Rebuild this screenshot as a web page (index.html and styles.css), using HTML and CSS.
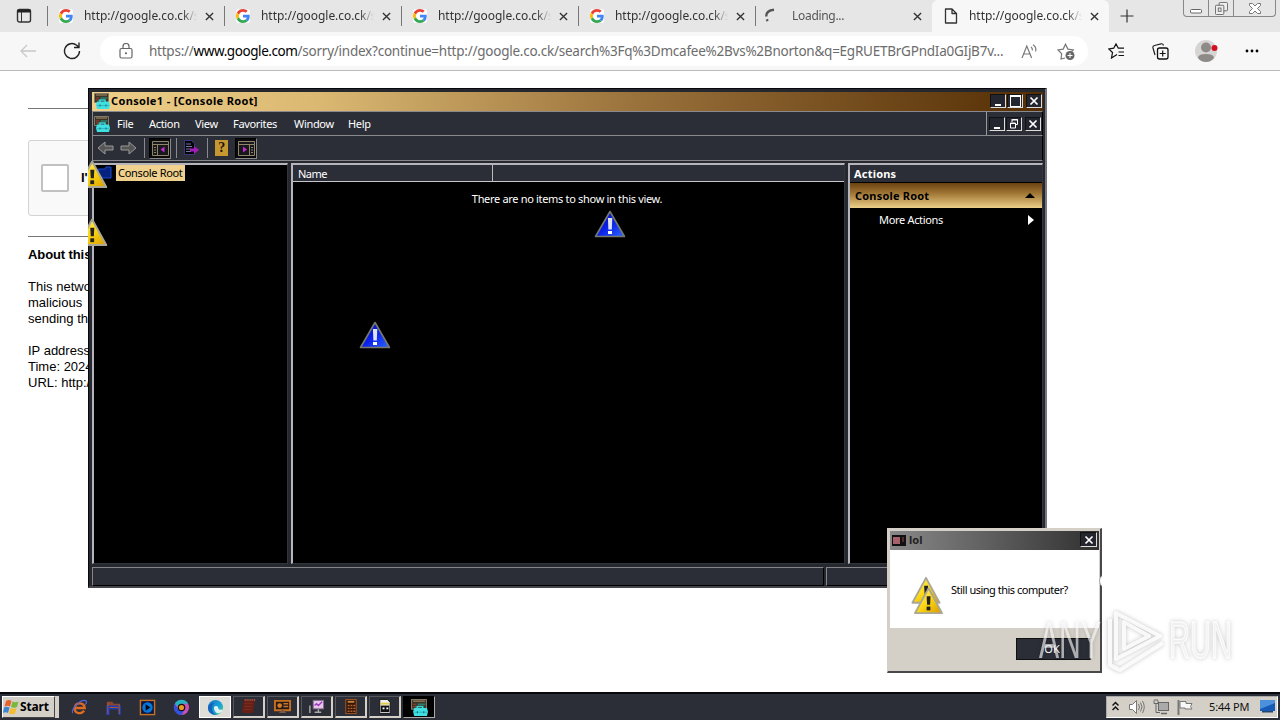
FILE: index.html
```html
<!DOCTYPE html>
<html lang="en">
<head>
<meta charset="utf-8">
<title>Desktop</title>
<link rel="stylesheet" href="styles.css">
</head>
<body>
<svg class="defs" width="0" height="0">
  <defs>
    <linearGradient id="gy" x1="0" y1="0" x2="1" y2="1"><stop offset="0" stop-color="#fff58a"/><stop offset=".5" stop-color="#fcd814"/><stop offset="1" stop-color="#d99a00"/></linearGradient>
    <linearGradient id="gb" x1="0" y1="0" x2="1" y2="1"><stop offset="0" stop-color="#0008a8"/><stop offset=".5" stop-color="#0a1fe8"/><stop offset="1" stop-color="#2c66ff"/></linearGradient>
    <linearGradient id="ge" x1="0" y1="0" x2="1" y2="1"><stop offset="0" stop-color="#1672c9"/><stop offset=".6" stop-color="#18a6d8"/><stop offset="1" stop-color="#5fd35b"/></linearGradient>
    <symbol id="google" viewBox="0 0 48 48"><circle cx="24" cy="24" r="30" fill="#fff"/><path fill="#EA4335" d="M24 9.5c3.54 0 6.71 1.22 9.21 3.6l6.85-6.85C35.9 2.38 30.47 0 24 0 14.62 0 6.51 5.38 2.56 13.22l7.98 6.19C12.43 13.72 17.74 9.5 24 9.5z"/><path fill="#4285F4" d="M46.98 24.55c0-1.57-.15-3.09-.38-4.55H24v9.02h12.94c-.58 2.96-2.26 5.48-4.78 7.18l7.73 6c4.51-4.18 7.09-10.36 7.09-17.65z"/><path fill="#FBBC05" d="M10.53 28.59c-.48-1.45-.76-2.99-.76-4.59s.27-3.14.76-4.59l-7.98-6.19C.92 16.46 0 20.12 0 24c0 3.88.92 7.54 2.56 10.78z"/><path fill="#34A853" d="M24 48c6.48 0 11.93-2.13 15.89-5.81l-7.73-6c-2.15 1.45-4.92 2.3-8.16 2.3-6.26 0-11.57-4.22-13.47-9.91l-7.98 6.19C6.51 42.62 14.62 48 24 48z"/></symbol>
    <symbol id="x" viewBox="0 0 10 10"><path d="M1 1l8 8M9 1l-8 8" stroke="#333" stroke-width="1.5" fill="none"/></symbol>
    <symbol id="warn" viewBox="0 0 32 30"><path d="M16 1.5L30.5 28H1.500z" fill="url(#gy)" stroke="#aaa796" stroke-width="2" stroke-linejoin="round"/><path d="M14 10h4.200l-.5 9h-3.200z" fill="#222"/><rect x="14" y="21" width="4" height="4" fill="#222"/></symbol>
    <symbol id="info" viewBox="0 0 32 28"><path d="M16 1.500L30.500 26.500H1.500z" fill="url(#gb)" stroke="#77796f" stroke-width="1.600" stroke-linejoin="round"/><path d="M13.900 8h4.400l-.5 11.500h-3.400z" fill="#dfe3f2"/><rect x="14" y="21" width="4" height="3" fill="#fff"/></symbol>
    <symbol id="mmc" viewBox="0 0 16 16"><path d="M.5.500h14v9H.500z" fill="#3a3527" stroke="#837b69"/><path d="M2 2h11" stroke="#b08f68"/><path d="M2 5h3M2 7h3" stroke="#aa3b2c"/><path d="M6.500 5h7M4 7.500h2" stroke="#2b7f72" stroke-width="1.500"/><path d="M6 9V7h5v2" fill="none" stroke="#35d6da" stroke-width="1.500"/><path d="M3 8.500h12l1 3.500-1 4H3l-1-4z" fill="#3fdfe2"/><path d="M3 12.500h12" stroke="#32b9bf"/><path d="M6 11.500v2M12 11.500v2" stroke="#0c6f78"/></symbol>
    <symbol id="wx" viewBox="0 0 10 10"><path d="M1.500 1.500l7 7M8.500 1.500l-7 7" stroke="#fff" stroke-width="1.700"/></symbol>
  </defs>
</svg>

<div class="browser">
  <div class="tabs">
    <div class="tab-menu"><svg width="16" height="16" viewBox="0 0 16 16"><rect x="1.500" y="1.500" width="13" height="12.500" rx="2" fill="none" stroke="#333" stroke-width="1.400"/><path d="M1.500 3h13" stroke="#222" stroke-width="3"/><path d="M5.500 4v10" stroke="#333"/></svg></div>
    <div class="tab"><svg class="fav"><use href="#google"/></svg><span class="tt">http://google.co.ck/s</span><svg class="cl"><use href="#x"/></svg></div>
    <div class="tab"><svg class="fav"><use href="#google"/></svg><span class="tt">http://google.co.ck/s</span><svg class="cl"><use href="#x"/></svg></div>
    <div class="tab"><svg class="fav"><use href="#google"/></svg><span class="tt">http://google.co.ck/s</span><svg class="cl"><use href="#x"/></svg></div>
    <div class="tab"><svg class="fav"><use href="#google"/></svg><span class="tt">http://google.co.ck/s</span><svg class="cl"><use href="#x"/></svg></div>
    <div class="tab"><svg class="fav" viewBox="0 0 14 14"><path d="M-.3 10.300L.8 12M-.8 7.500Q-1 1.500 7 .800" fill="none" stroke="#555" stroke-width="2.400"/></svg><span class="tt load">Loading...</span><svg class="cl"><use href="#x"/></svg></div>
    <div class="tab active"><svg class="fav doc" viewBox="0 0 14 16"><path d="M1.500 1h6.500l4.500 4.500V15h-11zM8 1v4.500h4.500" fill="none" stroke="#333" stroke-width="1.300" stroke-linejoin="round"/></svg><span class="tt">http://google.co.ck/s</span><svg class="cl"><use href="#x"/></svg></div>
    <svg class="plus" width="14" height="14" viewBox="0 0 14 14"><path d="M7 .5v13M.5 7h13" stroke="#333" stroke-width="1.200"/></svg>
    <div class="winbtns">
      <span><svg width="12" height="6"><rect x=".5" y="1.500" width="11" height="3.500" rx="1" fill="#fff" stroke="#666"/></svg></span>
      <span><svg width="13" height="13" viewBox="0 0 14 14" fill="#eee" stroke="#666"><rect x="4.500" y=".5" width="9" height="9" rx="1"/><rect x=".5" y="3.500" width="9" height="10" rx="1"/><rect x="3.500" y="6.500" width="3" height="3.500"/></svg></span>
      <span class="wide"><svg width="12" height="11" viewBox="0 0 12 11"><path d="M.5.500h3L6 3 8.500.500h3v2L8.500 5.500l3 3v2h-3L6 8l-2.500 2.500h-3v-2l3-3-3-3z" fill="#fff" stroke="#777"/></svg></span>
    </div>
  </div>
  <div class="toolbar">
    <svg class="back" width="16" height="14" viewBox="0 0 16 14"><path d="M7 1L1 7l6 6M1 7h15" fill="none" stroke="#c8c8c8" stroke-width="1.300"/></svg>
    <svg class="reload" width="18" height="18" viewBox="0 0 18 18"><path d="M16.500 9a7.500 7.500 0 1 1-2.800-5.800L15.500 5M16 .5V5.500h-5" fill="none" stroke="#222" stroke-width="1.400"/></svg>
    <div class="omni">
      <svg width="14" height="16" viewBox="0 0 14 16"><rect x="1" y="5.500" width="12" height="9.500" rx="1.500" fill="none" stroke="#666" stroke-width="1.200"/><path d="M4 5V3.500a3 3 0 0 1 6 0V5" fill="none" stroke="#666" stroke-width="1.200"/><circle cx="7" cy="10.200" r="1" fill="#555"/></svg>
      <span class="url">https://<b>www.google.com</b>/sorry/index?continue=http://google.co.ck/search%3Fq%3Dmcafee%2Bvs%2Bnorton&amp;q=EgRUETBrGPndIa0GIjB7v...</span>
      <svg class="read" width="17" height="15" viewBox="0 0 17 15" fill="none" stroke="#777" stroke-width="1.200"><path d="M1 14L5.800 2l4.800 12M2.500 10h6.500M10 3q1.800 1.300 1.300 3.500M12 .8q3.800 2.500 2.600 6.500"/></svg>
      <svg class="star" width="18" height="17" viewBox="0 0 18 17"><path d="M8 15l-4 1 .7-5.200L1 7l5.200-.9L8.500 1.200l2.400 4.900 5.300.9-1.500 1.500" fill="none" stroke="#777" stroke-width="1.200"/><circle cx="13" cy="12.500" r="4.500" fill="#666"/><path d="M13 10v5M10.500 12.500h5" stroke="#fff"/></svg>
    </div>
    <svg class="favs" width="17" height="16" viewBox="0 0 17 16"><path d="M9 11.500L3.500 15l1-5.500L.8 6l4.900-.8L8 .9l2.300 4.300H16M10.500 9H16M10.500 12.500H16" fill="none" stroke="#111" stroke-width="1.200"/></svg>
    <svg class="coll" width="17" height="17" viewBox="0 0 17 17"><path d="M3 12L1 5q-.5-2 1.500-2.500L9 .8q2-.3 2.500 1.700" fill="none" stroke="#222" stroke-width="1.200"/><rect x="5.500" y="5" width="10.500" height="11" rx="2" fill="none" stroke="#111" stroke-width="1.300"/><path d="M10.700 7.500v6M7.700 10.500h6" stroke="#111" stroke-width="1.200"/></svg>
    <svg class="ava" width="24" height="24" viewBox="0 0 24 24"><circle cx="12" cy="12" r="11" fill="#d7d5d3"/><circle cx="12" cy="8.500" r="5" fill="#8e8a88"/><path d="M4 19q0-4 8-4t8 4q-3 4-8 4t-8-4z" fill="#8e8a88"/><circle cx="20.500" cy="9" r="3" fill="#d2101f"/></svg>
    <svg class="more" width="14" height="4"><circle cx="2" cy="2" r="1.400"/><circle cx="7" cy="2" r="1.400"/><circle cx="12" cy="2" r="1.400"/></svg>
  </div>
  <div class="page">
    <div class="rule"></div>
    <div class="captcha"><span class="box"></span><b>I'</b></div>
    <div class="rule"></div>
    <p><b>About this</b></p>
    <p>This netwo<br>malicious<br>sending th</p>
    <p>IP address<br>Time: 2024<br>URL: http:/</p>
  </div>
</div>

<div class="console">
  <div class="ctitle"><svg class="i16"><use href="#mmc"/></svg><span>Console1 - [Console Root]</span>
    <div class="btns"><i class="min"></i><i class="max"></i><i><svg><use href="#wx"/></svg></i></div></div>
  <div class="menubar"><div class="menus"><svg class="i16"><use href="#mmc"/></svg><span>File</span><span>Action</span><span>View</span><span>Favorites</span><span>Window</span><span>Help</span></div>
    <div class="btns"><i class="min"></i><i><svg viewBox="0 0 10 10" fill="none" stroke="#fff"><path d="M3 1h6M3 0v3M3.500.500h5v5h-2M1.500 4h5v5h-5zM1 4.500h6"/></svg></i><i><svg><use href="#wx"/></svg></i></div></div>
  <div class="ctools">
    <svg width="17" height="14" viewBox="0 0 17 14"><path d="M1 7l7-6v4h8v4H8v4z" fill="#555" stroke="#999"/></svg>
    <svg width="17" height="14" viewBox="0 0 17 14"><path d="M16 7L9 1v4H1v4h8v4z" fill="#555" stroke="#999"/></svg>
    <em></em>
    <span class="press"><svg width="17" height="15" viewBox="0 0 17 15"><path d="M.5.500h16v14H.500zM1 3.500h15M5.500 4v10M2 6.500h2M2 9h2M2 11.500h2" fill="#17181c" stroke="#908568"/><path d="M12.500 5.500v6L8.500 8.500z" fill="#c32bd0"/></svg></span>
    <em></em>
    <svg width="17" height="16" viewBox="0 0 17 16"><path d="M1.500.500h7l3 3v11h-10z" fill="#050508" stroke="#383a80"/><path d="M3 4h5M3 6.500h6M3 9h5M3 11.500h5" stroke="#79759d"/><path d="M7 8.500h4V6l5 4-5 4v-2.500H7z" fill="#a51cbd"/></svg>
    <em></em>
    <span class="help">?</span>
    <span class="press"><svg width="17" height="15" viewBox="0 0 17 15"><path d="M.5.500h16v14H.500zM1 3.500h15M11.500 4v10M13 6.500h2M13 9h2M13 11.500h2" fill="#17181c" stroke="#908568"/><path d="M5 5.500v6l4-3z" fill="#c32bd0"/></svg></span>
  </div>
  <div class="panes">
    <div class="pane tree"><svg width="16" height="14" viewBox="0 0 16 14"><path d="M1 3h7l1-2h5v11H2z" fill="#04227e" stroke="#1d49cc"/></svg><span>Console Root</span></div>
    <div class="pane list"><div class="lh"><span>Name</span></div><div class="empty">There are no items to show in this view.</div></div>
    <div class="pane acts"><div class="ah">Actions</div><div class="ag"><span>Console Root</span><svg width="10" height="5"><path d="M0 5l5-5 5 5z"/></svg></div><div class="am"><span>More Actions</span><svg width="6" height="10"><path d="M0 0l6 5-6 5z" fill="#fff"/></svg></div></div>
  </div>
  <div class="status"><span></span><span></span></div>
</div>

<svg class="warn w1" viewBox="12 0 20 30"><use href="#warn" width="32" height="30"/></svg>
<svg class="warn w2" viewBox="12 0 20 30"><use href="#warn" width="32" height="30"/></svg>
<svg class="info n1"><use href="#info"/></svg>
<svg class="info n2"><use href="#info"/></svg>
<div class="sliver"></div>

<div class="dialog">
  <div class="dtitle"><svg width="14" height="11"><rect width="14" height="11" fill="#121012"/><rect x="1" y="2" width="7" height="7" fill="#a6616b"/><path d="M11 2v5" stroke="#944"/></svg><span>lol</span><div class="btns"><i><svg><use href="#wx"/></svg></i></div></div>
  <div class="dbody"><svg width="34" height="40" viewBox="0 0 34 40"><use href="#warn" x="0" y="0" width="30" height="29"/><use href="#warn" x="2" y="11" width="31" height="28"/></svg><span>Still using this computer?</span></div>
  <div class="dfoot"><span class="ok">OK</span></div>
</div>

<div class="taskbar">
  <div class="start"><svg width="17" height="16" viewBox="0 0 17 16"><path d="M3 2q3-2 5.500 0L7 7.500Q4.500 6 1.500 7.500z" fill="#e8602a"/><path d="M9.500 2.500q3 1.500 6 0L14 8q-3 1.500-6 0z" fill="#79b83a"/><path d="M1 8.500q3-1.500 5.500 0L5 14Q2.500 12.500 0 14z" fill="#3d83d0"/><path d="M7.500 9q3 1.500 6 0L12 14.500q-3 1.500-6 0z" fill="#f5bd2c"/></svg><b>Start</b></div><div class="grip"></div>
  <div class="apps">
    <span><svg viewBox="0 0 18 18"><path d="M4 9.500h10.500C14 3 5 3 4 9s6 8 10 3.500" fill="none" stroke="#df6b20" stroke-width="2.500"/><path d="M2 15Q0 12 6 6T16 2q1 2-1 4" fill="none" stroke="#5262d8" stroke-width="1.300"/></svg></span>
    <span><svg viewBox="0 0 18 18"><path d="M2 3h6l1 2h7v4H2z" fill="#8a4634"/><path d="M1 7h16v10h-3v-6H5v6H1z" fill="#1c3dae"/><path d="M3 4v12M15 6v10M5 9h9" stroke="#b95a2c"/></svg></span>
    <span><svg viewBox="0 0 18 18"><rect x="1.500" y="1.500" width="15" height="15" fill="#0b1744" stroke="#c97022" stroke-width="1.500"/><circle cx="9" cy="9" r="5.500" fill="#0878d8"/><path d="M7 5.500l5 3.500-5 3.500z" fill="#020611"/></svg></span>
    <span><svg viewBox="0 0 18 18"><circle cx="9" cy="9" r="8" fill="#ca4fb7"/><path d="M2 5a8 8 0 0 0 7 12l4-7H5z" fill="#3150dc"/><path d="M2 5a8 8 0 0 1 14 0H9L6 9z" fill="#25b4c2"/><circle cx="9" cy="9" r="4" fill="#141114"/><circle cx="9" cy="9" r="2.700" fill="#ec9a1d"/></svg></span>
    <span class="on"><svg viewBox="0 0 18 18"><circle cx="9" cy="9" r="8" fill="url(#ge)"/><path d="M7.500 10.500q-.5-3 2-3t2.500 2.500q0 1.500 3 1.500t2-1l-1 3q-3 2.500-6 1-2.200-1.500-2.500-4z" fill="#dff1f2"/><path d="M1 9q1-5 7-5-3 3-2.500 7t5 6Q1 17 1 9z" fill="#1264ba"/></svg></span>
    <span class="app"><svg viewBox="0 0 18 18"><path d="M4 2h12l-2 14H2z" fill="#652018"/><path d="M5 2h11" stroke="#c06048" stroke-width="2" stroke-dasharray="1 1"/><path d="M5 6h8M4.500 9h8M4 12h8" stroke="#812e20"/></svg></span>
    <span class="app"><svg viewBox="0 0 18 18"><path d="M1 3h16v10H1z" fill="#241b16" stroke="#c96d1e" stroke-width="2"/><circle cx="6" cy="8" r="2.500" fill="#d77a27"/><path d="M10 6h5M10 9h5" stroke="#c17534" stroke-width="1.500"/><path d="M5 16l4-4 4 4z" fill="#7a5a44"/></svg></span>
    <span class="app"><svg viewBox="0 0 18 18"><rect x="5.500" y="2.500" width="11" height="9" fill="#e6c6ed" stroke="#806888"/><path d="M7 8l2-2 2 2 4-4" fill="none" stroke="#a33ac2" stroke-width="1.500"/><path d="M2 8v8M7 15h7M11 12v3" stroke="#aaa" stroke-width="1.500"/></svg></span>
    <span class="app"><svg viewBox="0 0 18 18"><rect x="4" y="1.500" width="11" height="15" fill="#32170b" stroke="#a65823"/><path d="M6 4h7" stroke="#c7833c" stroke-width="2"/><path d="M6 8h8M6 11h8M6 14h8" stroke="#ba622c" stroke-width="1.500" stroke-dasharray="2 1"/></svg></span>
    <span class="app"><svg viewBox="0 0 18 18"><path d="M4 1.500h8l3 3v12H4z" fill="#eee" stroke="#111"/><path d="M5 6h9" stroke="#e5c942" stroke-width="2"/><rect x="5" y="8" width="9" height="7" fill="#111"/><path d="M7 11h2M11 11h2" stroke="#fff" stroke-width="2"/></svg></span>
    <span class="app cur"><svg><use href="#mmc"/></svg></span>
  </div>
  <div class="tray">
    <svg class="chev" width="7" height="10" viewBox="0 0 7 10"><path d="M.5 4.500l3-3 3 3M.5 9l3-3 3 3" fill="none" stroke="#111" stroke-width="1.500"/></svg>
    <svg class="vol" width="16" height="14" viewBox="0 0 16 14"><path d="M.5 4.500h3l4-4v13l-4-4h-3z" fill="#fff" stroke="#777"/><path d="M9.500 4q2 3 0 6M11.500 2.500q3 4.500 0 9M13.500 1q3.500 6 0 12" fill="none" stroke="#777"/></svg>
    <svg class="net" width="17" height="16" viewBox="0 0 17 16"><rect x="5.500" y="3.500" width="10" height="8" fill="#aaa" stroke="#666"/><path d="M8 14.500h6" stroke="#666" stroke-width="1.500"/><path d="M1 1.500v3h4v-3M2 0v2M4 0v2M3 5v8.500h4" fill="none" stroke="#666"/></svg>
    <svg class="flag" width="17" height="15" viewBox="0 0 17 15"><path d="M1.500 0v15" stroke="#777" stroke-width="2"/><path d="M3 1.500h6v2h6l-1.500 3 1.500 2.500H8v-1H3z" fill="#f7f7f7" stroke="#777"/></svg>
    <span>5:44 PM</span>
    <svg width="15" height="14"><rect width="15" height="11" fill="#165bb6"/><path d="M0 0h15v3L0 9z" fill="#4c91db"/><rect x="2" y="11" width="11" height="1.500" fill="#24456d"/></svg>
  </div>
</div>

<svg class="mark" width="210" height="72" viewBox="0 0 210 72">
  <g fill="#fff" fill-opacity=".62" stroke="none"><text x="7" y="54" font-size="52" textLength="62" lengthAdjust="spacingAndGlyphs">ANY</text><text x="137" y="54" font-size="52" textLength="63" lengthAdjust="spacingAndGlyphs" stroke="#fff" stroke-opacity=".8" stroke-width="1.500">RUN</text></g>
  <path d="M84 9v46l44-23zM78 15v46l9 5M92 18v27l25-13zM78 61l10 5 43-27" fill="none" stroke="#fff" stroke-opacity=".85" stroke-width="4" stroke-linejoin="round"/>
</svg>
</body>
</html>
```
FILE: styles.css
```css
* { box-sizing: border-box; }
body { margin: 0; width: 1280px; height: 720px; overflow: hidden; position: relative; background: #fff; font-family: "Noto Sans", sans-serif; }
svg { flex: none; display: block; }
.defs { position: absolute; }
.browser { height: 692px; display: flex; flex-direction: column; }
.tabs { height: 32px; background: #e6e6e6; display: flex; align-items: stretch; flex: none; }
.tab-menu { width: 47px; padding: 8px 0 0 16px; }
.tab { width: 177px; display: flex; align-items: center; padding: 0 0 0 12px; background: linear-gradient(#777, #777) 0 6px / 1px 20px no-repeat; }
.tab.active { background: #f7f7f7; border-radius: 6px 6px 0 0; }
.fav { width: 14px; height: 14px; margin-right: 11px; overflow: visible; }
.doc { width: 14px; height: 16px; }
.tt { width: 116px; height: 20px; line-height: 20px; font-size: 12px; letter-spacing: -0.05px; color: #333; white-space: nowrap; -webkit-mask: linear-gradient(90deg, #000 98px, transparent 113px); }
.load { color: #555; letter-spacing: -.3px; }
.cl { width: 9px; height: 9px; margin-left: 5px; }
.plus { margin: 9px 0 0 11px; }
.winbtns { margin-left: 49px; height: 17px; display: flex; border: 1px solid #888; border-top: 0; border-radius: 0 0 4px 4px; }
.winbtns span { width: 25px; display: flex; justify-content: center; align-items: center; border-right: 1px solid #888; }
.winbtns span:first-child { padding-top: 5px; }
.winbtns .wide { width: 41px; border: 0; }
.toolbar { height: 39px; background: #f7f7f7; border-bottom: 1px solid #bbb; display: flex; align-items: center; flex: none; }
.back { margin-left: 20px; }
.reload { margin-left: 27px; }
.omni { margin-left: 19px; width: 988px; height: 30px; border-radius: 15px; background: #fff; display: flex; align-items: center; padding-left: 19px; }
.url { width: 856px; margin-left: 16px; font-size: 13.5px; letter-spacing: -.24px; color: #6c6c6c; white-space: nowrap; }
.url b { color: #000; font-weight: 400; letter-spacing: -.42px; }
.read { margin-left: 16px; }
.star { margin-left: 19px; }
.favs { margin-left: 20px; }
.coll { margin-left: 27px; }
.ava { margin-left: 25px; }
.more { margin-left: 27px; }
.page { flex: 1; width: 400px; padding: 37px 0 0 28px; font: 13px/16px "Liberation Sans", Arial, sans-serif; color: #000; }
.rule { height: 1px; background: #777; }
.captcha { margin: 31px 0 20px; height: 76px; width: 300px; background: #f9f9f9; border: 1px solid #d3d3d3; border-radius: 3px; display: flex; align-items: center; }
.box { width: 28px; height: 28px; margin: 0 12px; background: #fff; border: 2px solid #c1c1c1; border-radius: 2px; }
.page p { margin: 0 0 16px; }
.rule + p { margin-top: 10px; letter-spacing: -.1px; }
.console { position: absolute; left: 88px; top: 88px; width: 959px; height: 500px; background: #26282f; border: 1px solid #08080c; border-right: 2px solid #77777d; border-bottom: 2px solid #45454c; padding: 3px 2px 0 3px; color: #fff; font-size: 11px; letter-spacing: -.32px; display: flex; flex-direction: column; }
.i16 { width: 16px; height: 16px; }
.ctitle { height: 19px; display: flex; align-items: center; padding: 0 0 1px 2px; background: linear-gradient(90deg, #efcf88, #dab872 24%, #98703a 58%, #542d04); color: #000; font-weight: 700; letter-spacing: .35px; }
.ctitle span { margin: -2px 0 0 1px; }
.btns { margin-left: auto; display: flex; }
.btns i { width: 16px; height: 14px; margin-right: 1px; background: #23262e; border: 1px solid #111; border-right-color: #ddd; border-bottom-color: #ddd; display: flex; align-items: center; justify-content: center; }
.btns i + i + i { margin-left: 2px; }
.btns svg { width: 10px; height: 10px; }
.btns .min::after { content: ""; width: 6px; height: 2px; background: #fff; margin: 7px 0 0 0; }
.btns .max::after { content: ""; width: 9px; height: 9px; border: 1px solid #fff; border-top-width: 2px; }
.menubar { height: 25px; border: 1px solid #7d7d82; border-color: #8a8a8e #000 #8a8a8e #8a8a8e; background: #2b2e37; display: flex; align-items: center; flex: none; }
.menubar > .btns { border-left: 1px solid #999; height: 23px; padding: 5px 0 0 2px; }
.menus { display: grid; grid-template-columns: 23px 32px 46px 38px 61px 54px 30px; align-items: center; padding-left: 1px; }
.ctools { height: 25px; background: #2b2e37; border: 1px solid #85858a; border-top: 0; border-right-color: #000; display: flex; align-items: center; gap: 6px; padding-left: 4px; flex: none; }
.ctools em { width: 1px; height: 20px; background: #8a8a8e; margin: 0 0 0 1px; }
.ctools em ~ em { margin: 0 0 0 1px; }
.press { width: 22px; height: 21px; background: #0a0a0d; border: 1px solid #000; border-right-color: #888; border-bottom-color: #888; display: grid; place-items: center; margin: 0 -2px; }
.help { width: 13px; height: 16px; background: #c79830; color: #18130a; font: 700 14px/16px "Liberation Serif", serif; text-align: center; margin: 0 3px 0 1px; }
.panes { margin-top: 2px; height: 401px; display: grid; grid-template-columns: 196px 554px 195px; gap: 3px; }
.pane { background: #000; border: 2px solid #b5b5bb; border-width: 2px 1px 1px 2px; border-right-color: #33353c; border-bottom-color: #33353c; min-width: 0; }
.tree { display: flex; align-items: flex-start; padding-left: 3px; }
.tree svg { margin-top: 1px; }
.tree span { background: #efd08d; color: #000; height: 16px; line-height: 16px; margin-left: 3px; padding: 0 2px; white-space: nowrap; }
.lh { height: 17px; background: #2b2e37; border-bottom: 1px solid #c5c5ca; line-height: 17px; letter-spacing: -.5px; }
.lh span { display: block; width: 200px; height: 16px; padding-left: 5px; border-right: 1px solid #bbb; }
.empty { text-align: center; margin-top: 9px; line-height: 16px; padding-right: 3px; }
.ah { height: 17px; background: #2b2e37; font-weight: 700; line-height: 17px; padding-left: 4px; letter-spacing: .2px; }
.ag { height: 25px; margin-top: 1px; background: linear-gradient(#6b410f, #a57b39 45%, #ecd08a); color: #000; font-weight: 700; letter-spacing: .2px; display: flex; align-items: center; justify-content: space-between; padding: 0 7px 0 5px; }
.am { height: 23px; display: flex; align-items: center; justify-content: space-between; padding: 0 8px 0 29px; }
.status { height: 19px; margin-top: 3px; display: grid; grid-template-columns: 732px 1fr; gap: 2px; }
.status span { background: #2b2e37; border: 1px solid #85858a; border-right-color: #000; border-bottom-color: #000; }
.warn { position: absolute; left: 88px; width: 20px; height: 29px; }
.w1 { top: 160px; } .w2 { top: 218px; }
.info { position: absolute; width: 32px; height: 28px; }
.n1 { left: 594px; top: 210px; } .n2 { left: 359px; top: 321px; }
.sliver { position: absolute; left: 1099px; top: 574px; width: 14px; height: 14px; border: 1px solid #aaa; border-radius: 50%; clip-path: inset(0 11px 0 0); background: #fff; z-index: 2; }
.dialog { position: absolute; left: 887px; top: 528px; width: 215px; height: 145px; background: #d4d0c8; border: 1px solid #d4d0c8; border-right: 2px solid #48484a; border-bottom: 2px solid #48484a; padding: 2px 1px 1px 2px; font-size: 11px; color: #000; }
.dtitle { height: 19px; background: linear-gradient(90deg, #898989, #303030); display: flex; align-items: center; padding: 0 2px; font-weight: 700; color: #222; }
.dtitle span { margin: -2px 0 0 3px; }
.dtitle i { width: 17px; height: 15px; margin: -2px 0 0; }
.dbody { height: 78px; background: #fff; display: flex; align-items: center; padding-left: 21px; white-space: nowrap; letter-spacing: -.5px; }
.dbody svg { margin-top: 13px; }
.dbody span { margin-left: 6px; }
.dfoot { padding: 10px 8px 0 0; display: flex; justify-content: flex-end; }
.ok { width: 75px; height: 22px; background: #2b2e37; border: 1px solid #111; border-right-color: #888; color: #fff; text-align: center; line-height: 20px; padding-right: 3px; }
.taskbar { height: 28px; display: flex; background: #2b2e37; border-top: 2px solid #08080c; padding: 2px; align-items: stretch; font-size: 11px; }
.start { width: 53px; background: #d4d0c8; border: 1px solid #fff; border-right-color: #444; border-bottom-color: #444; display: flex; align-items: center; }
.start b { font-size: 12px; letter-spacing: -.15px; margin-top: -1px; }
.grip { width: 4px; background: #d4d0c8; }
.apps { display: flex; margin-left: 4px; }
.apps > span { width: 32px; margin-right: 2px; display: grid; place-items: center; }
.apps svg { width: 17px; height: 17px; }
.apps .on { background: #dedcd6; border: 1px solid #fff; }
.apps .app { border: 1px solid #55575d; border-right: 2px solid #d4d0c8; border-bottom: 2px solid #d4d0c8; }
.apps .cur { background: #000; border: 1px solid #000; border-right-color: #aaa; border-bottom-color: #aaa; }
.tray { margin-left: auto; width: 172px; background: #d4d0c8; border: 1px solid #aaa; border-right-color: #fff; border-bottom-color: #fff; display: flex; align-items: center; padding-left: 5px; color: #111; }
.chev { margin-right: 10px; margin-bottom: 2px; } .vol { margin-right: 8px; } .net { margin-right: 7px; } .flag { margin-right: 15px; }
.tray span { width: 40px; margin: -1px 11px 0 0; white-space: nowrap; letter-spacing: -.15px; }
.mark { position: absolute; left: 1032px; top: 604px; font-family: "Liberation Sans", Arial, sans-serif; filter: drop-shadow(0 0 2px rgba(0,0,0,.28)); z-index: 3; }
```
